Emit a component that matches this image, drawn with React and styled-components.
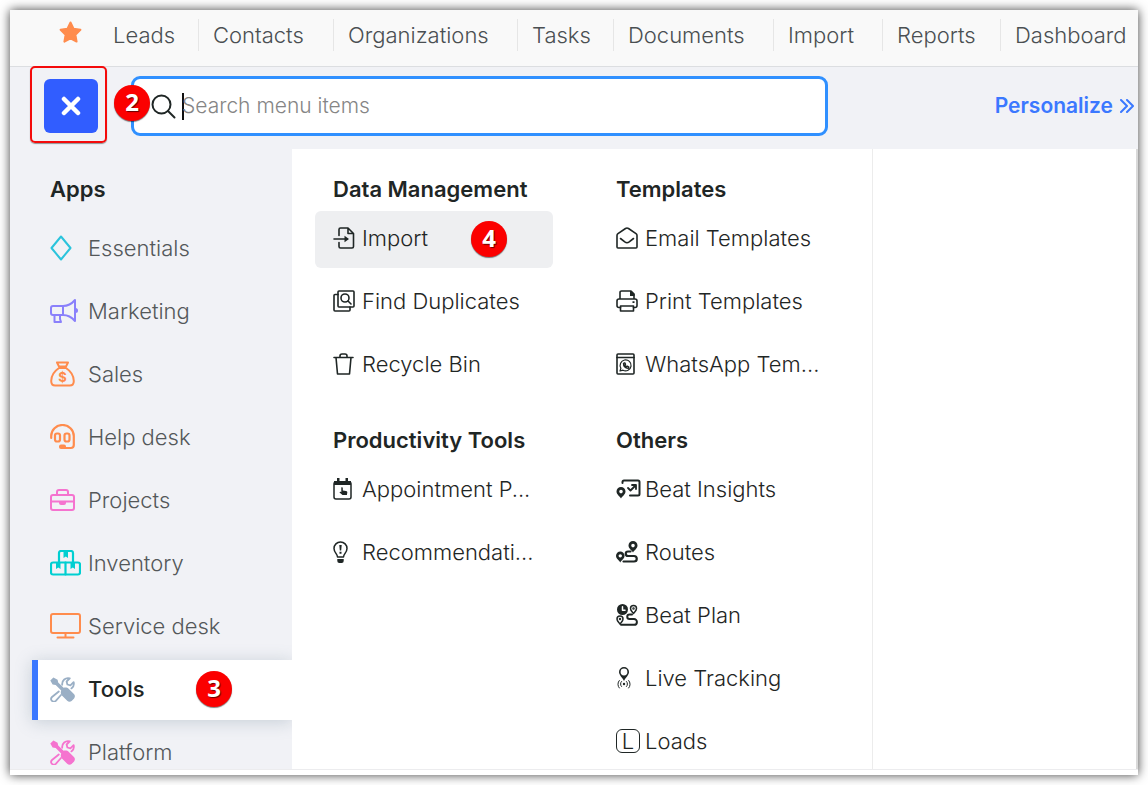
import React from "react";
import styled, { createGlobalStyle, css } from "styled-components";

const GlobalStyle = createGlobalStyle`
  *, *::before, *::after { box-sizing: border-box; }
  body { margin: 0; background: #fff; font-family: Inter, "Open Sans", sans-serif; color: #1f2625; }
  a { color: inherit; text-decoration: none; }
  ul { list-style: none; margin: 0; padding: 0; }
  h2 { margin: 0; }
`;

const Page = styled.div`
  height: 100vh;
  padding: 10px;
`;

const Frame = styled.div`
  display: flex;
  flex-direction: column;
  height: 100%;
  padding-bottom: 5px;
  background: #fff;
  box-shadow: 0 0 10px rgba(0, 0, 0, 0.75);
`;

const TopBar = styled.nav`
  display: flex;
  flex: none;
  height: 57px;
  background: #f9f9f9;
  border-bottom: 1px solid #dcdee1;
  overflow: hidden;
`;

const Favourite = styled.a`
  flex: none;
  width: 88px;
  padding: 10px 0 0 48px;
`;

const Tabs = styled.ul`
  display: grid;
  grid-template-columns: 100px 135px 184px 96px 160px 109px 118px 1fr;
  flex: 1;
  padding-top: 9px;
`;

const Tab = styled.li`
  height: 32px;
  padding-left: 15px;
  font-size: 22px;
  font-weight: 300;
  line-height: 32px;
  color: #4a4f52;
  white-space: nowrap;
  & + & { border-left: 1px solid #e6e6e6; padding-left: 14px; }
`;

const Header = styled.header`
  position: relative;
  display: flex;
  flex: none;
  align-items: center;
  height: 82px;
  padding: 0 4px 4px 34px;
  background: #f1f2f6;
`;

const CloseWrap = styled.div`
  position: relative;
  flex: none;
  margin-right: 33px;
`;

const Marker = styled.span`
  position: absolute;
  inset: -13px -9px -10px -14px;
  border: 2px solid #f40b0b;
  border-radius: 5px;
  box-shadow: 0 1px 1px rgba(0, 0, 0, 0.4);
  pointer-events: none;
`;

const CloseButton = styled.button`
  display: grid;
  place-items: center;
  width: 54px;
  height: 54px;
  padding: 0;
  border: 0;
  border-radius: 6px;
  background: #315dff;
`;

const SearchBox = styled.label`
  position: relative;
  display: flex;
  align-items: center;
  flex: 0 1 697px;
  height: 60px;
  padding-left: 17px;
  border: 3px solid #3090ff;
  border-radius: 9px;
  background: #fff;
`;

const Caret = styled.span`
  width: 2px;
  height: 27px;
  margin: 0 -2px 0 6px;
  background: #111;
`;

const SearchInput = styled.input`
  flex: 1;
  min-width: 0;
  padding: 0;
  border: 0;
  outline: 0;
  background: transparent;
  font: 300 21px/30px Inter, "Open Sans", sans-serif;
  &::placeholder { color: #858585; opacity: 1; }
`;

const Personalize = styled.a`
  display: flex;
  align-items: center;
  gap: 7px;
  margin-left: auto;
  font-size: 21px;
  font-weight: 600;
  line-height: 30px;
  color: #3b78ff;
`;

const Badge = styled.span`
  position: absolute;
  top: 50%;
  left: ${(p) => p.$left}px;
  display: grid;
  place-items: center;
  width: 36px;
  height: 36px;
  margin-top: ${(p) => (p.$raised ? -21 : -19)}px;
  border-radius: 50%;
  background: #fb0000;
  box-shadow: 0 1px 1px rgba(0, 0, 0, 0.5);
  color: #fff;
  font: 700 24px/32px "Open Sans", sans-serif;
  padding-bottom: 2px;
  text-shadow: 1px 1px 1px rgba(0, 0, 0, 0.6);
`;

const Main = styled.main`
  display: flex;
  flex: 1;
  min-height: 0;
  overflow: hidden;
  border-bottom: 1px solid #ececee;
`;

const Sidebar = styled.aside`
  flex: none;
  width: 282px;
  padding: 10px 0 0 22px;
  overflow: hidden;
  background: #f1f2f6;
`;

const SideTitle = styled.h2`
  padding-left: 18px;
  font-size: 22px;
  font-weight: 600;
  line-height: 60px;
`;

const SideList = styled.ul`
  display: flex;
  flex-direction: column;
  gap: 3px;
`;

const SideItem = styled.a`
  position: relative;
  display: flex;
  align-items: center;
  height: 60px;
  padding: 0 0 2px 12px;
  border-left: 6px solid transparent;
  font-size: 22px;
  font-weight: 300;
  color: #54585a;
  ${(p) =>
    p.$active &&
    css`
      border-left-color: #3b78ff;
      background: #fff;
      box-shadow: 0 2px 16px rgba(110, 130, 150, 0.32);
      color: #1f2625;
      font-weight: 500;
    `}
`;

const SideIcon = styled.span`
  display: flex;
  flex: none;
  width: 38px;
  color: ${(p) => p.$color};
`;

const Panel = styled.section`
  display: flex;
  flex: 1;
  min-width: 0;
  border-right: 2px solid #d9d9d9;
`;

const Columns = styled.div`
  display: grid;
  grid-template-columns: 238px 238px;
  gap: 45px;
  flex: none;
  width: 581px;
  padding: 18px 0 0 23px;
  border-right: 1px solid #ececec;
`;

const Column = styled.div`
  display: flex;
  flex-direction: column;
  gap: 24px;
`;

const GroupTitle = styled.h2`
  padding-left: 18px;
  font-size: 22px;
  font-weight: 600;
  line-height: 44px;
  white-space: nowrap;
`;

const GroupList = styled.ul`
  display: flex;
  flex-direction: column;
  gap: 6px;
`;

const MenuItem = styled.a`
  position: relative;
  display: flex;
  align-items: center;
  height: 57px;
  padding: 0 0 3px 18px;
  border-radius: 6px;
  background: ${(p) => (p.$active ? "#eeeff1" : "transparent")};
  font-size: 22px;
  font-weight: 300;
  white-space: nowrap;
`;

const MenuIcon = styled.span`
  display: flex;
  flex: none;
  width: 29px;
`;

const LetterBox = styled.span`
  display: grid;
  place-items: center;
  width: 24px;
  height: 24px;
  border: 1px solid #1f2625;
  border-radius: 6px;
  line-height: 20px;
`;

function Icon({ w, h, sw = 2, children }) {
  return (
    <svg
      width={w}
      height={h}
      viewBox={`0 0 ${w} ${h}`}
      fill="none"
      stroke="currentColor"
      strokeWidth={sw}
      strokeLinecap="round"
      strokeLinejoin="round"
      aria-hidden="true"
    >
      {children}
    </svg>
  );
}

const solid = { fill: "currentColor", stroke: "none" };

const toolsIcon = (
  <Icon w={25} h={25}>
    <path {...solid} d="M.3 3.500 3.400.4l4.200 2.300.6 2.700 5.400 5.400c2-.6 3.900-.2 5.300 1.200l5 5c1.300 1.300 1.300 3.200.2 4.400l-2.500 2.500c-1.200 1.100-3.100 1.100-4.400-.2l-5-5c-1.400-1.400-1.800-3.300-1-5.300L5.700 8.100l-3.100-.6z" />
    <path strokeWidth="1.800" d="M8.800 14.500 2 20a2.600 2.600 0 0 0 3.800 3.800L11 18" />
    <path strokeWidth="1.800" d="M12.200 7.800C11.800 3.400 15.400.2 19.800 1.300L16.600 4.500l.8 3 3 .8 3.200-3.200c.7 2.600-.3 5-2.200 6.300" />
  </Icon>
);

const apps = [
  { name: "Essentials", color: "#2bc4dc", icon: <Icon w={22} h={26}><path d="M11 1.500 20.500 13 11 24.500 1.500 13z" /></Icon> },
  {
    name: "Marketing", color: "#8a80fb",
    icon: (
      <Icon w={28} h={26}>
        <path d="M13 8H3a2 2 0 0 0-2 2v5a2 2 0 0 0 2 2h10z" />
        <path d="M13 8c5 0 9-2.500 12-6v21c-3-3.500-7-6-12-6z" />
        <path d="M4.500 17v7H11l-1-3V17" />
        <path {...solid} d="M25.500 10a2.500 2.500 0 0 1 0 5z" />
      </Icon>
    ),
  },
  {
    name: "Sales", color: "#ff8c4d",
    icon: (
      <Icon w={25} h={26}>
        <path d="M7 1.500h11L16 5.500H9z" />
        <path d="M9 7C4.500 10 1.200 15 1.200 20c0 3 1.500 4.500 4 4.500h14.600c2.500 0 4-1.500 4-4.500 0-5-3.300-10-7.800-13z" />
        <text x="12.500" y="20.500" textAnchor="middle" {...solid} fontSize="13" fontWeight="700">$</text>
      </Icon>
    ),
  },
  {
    name: "Help desk", color: "#ff8c4d",
    icon: (
      <Icon w={25} h={26} sw={2.2}>
        <path d="M1.200 14v-2a11.300 11 0 0 1 22.600 0v9a3 3 0 0 1-3 3H14" />
        <rect x="5" y="9.500" width="5" height="8" rx="2" />
        <rect x="14.500" y="9.500" width="5" height="8" rx="2" />
        <rect {...solid} x="9" y="20.500" width="7" height="4.500" rx="2" />
      </Icon>
    ),
  },
  {
    name: "Projects", color: "#f573cf",
    icon: (
      <Icon w={25} h={22}>
        <rect x="1" y="6" width="23" height="15" rx="2" />
        <path d="M7 6V3a2 2 0 0 1 2-2h7a2 2 0 0 1 2 2v3M1 12.500h23" />
        <path {...solid} d="M9 12.500h7v1.500a2 2 0 0 1-2 2h-3a2 2 0 0 1-2-2z" />
      </Icon>
    ),
  },
  {
    name: "Inventory", color: "#00cfd1",
    icon: (
      <Icon w={31} h={26} sw={2.2}>
        <path d="M9 12.500V3a2 2 0 0 1 2-2h10a2 2 0 0 1 2 2v9.500" />
        <rect x="1" y="12.500" width="29" height="12" rx="2" />
        <path d="M15.500 12.500v12" />
        <path {...solid} d="M13.500 1h4.500v7l-2.200-1.500L13.500 8zM6 12.500h4.500v6.500l-2.200-1.500L6 19zM20.500 12.500H25v6.500l-2.200-1.500-2.300 1.500z" />
      </Icon>
    ),
  },
  {
    name: "Service desk", color: "#ff8c4d",
    icon: (
      <Icon w={31} h={26}>
        <rect x="1" y="1" width="29" height="19" rx="2" />
        <path d="M15.500 20v4M7.500 24.500h16" />
      </Icon>
    ),
  },
  { name: "Tools", color: "#9aafc5", active: true, badge: "3", icon: toolsIcon },
  { name: "Platform", color: "#f573cf", icon: toolsIcon },
];

const pin = (x, y, k = 1) => (
  <path
    {...solid}
    fillRule="evenodd"
    transform={`translate(${x} ${y}) scale(${k})`}
    d="M4.500 0A4.500 4.500 0 0 0 0 4.500C0 7.500 3 9 4.500 11.500 6 9 9 7.500 9 4.500A4.500 4.500 0 0 0 4.500 0zM4.500 2.800a1.800 1.800 0 1 1 0 3.600 1.800 1.800 0 0 1 0-3.600z"
  />
);

const columns = [
  [
    {
      title: "Data Management",
      items: [
        {
          name: "Import", active: true, badge: "4",
          icon: (
            <Icon w={22} h={22} sw={1.6}>
              <path d="M6 8.500V2.500A1.500 1.500 0 0 1 7.500 1H15l5.500 5.500v13a1.500 1.500 0 0 1-1.500 1.500H7.500A1.500 1.500 0 0 1 6 19.500V15.500M15 1v5.500h5.500M1 12h13" />
              <path {...solid} d="M11.500 8.700 16 12l-4.500 3.300z" />
            </Icon>
          ),
        },
        {
          name: "Find Duplicates",
          icon: (
            <Icon w={22} h={22} sw={1.6}>
              <rect x="5" y="1" width="16" height="16" rx="1" />
              <path d="M5 4.500H2a1 1 0 0 0-1 1V20a1 1 0 0 0 1 1h14a1 1 0 0 0 1-1v-3" />
              <circle cx="12" cy="8" r="4" />
              <path d="m15 11 3 3" />
            </Icon>
          ),
        },
        {
          name: "Recycle Bin",
          icon: (
            <Icon w={21} h={22} sw={1.6}>
              <path d="M1 4.500h19M3 4.500 4.500 21h12L18 4.500M7 4.500V3a2 2 0 0 1 2-2h3a2 2 0 0 1 2 2v1.500" />
            </Icon>
          ),
        },
      ],
    },
    {
      title: "Productivity Tools",
      items: [
        {
          name: "Appointment P...",
          icon: (
            <Icon w={19} h={22} sw={1.5}>
              <rect x="1" y="4" width="17" height="17" rx="2" />
              <path {...solid} d="M1 3h17v4H1zM4 0h2.500v4H4zM12.500 0H15v4h-2.500z" />
              <path {...solid} d="M8.300 9.600c.8-.6 1.500 0 1.500.8v2l3.200.5c1 .2 1.400.8 1.300 1.700L13.900 17H9.500l-3-2.500c.4-.8 1.100-.8 1.800-.2z" />
            </Icon>
          ),
        },
        {
          name: "Recommendati...",
          icon: (
            <Icon w={15} h={22} sw={1.5}>
              <path d="M4.500 16c0-3-3.500-4.500-3.500-8.500a6.500 6.500 0 0 1 13 0c0 4-3.500 5.500-3.500 8.500z" />
              <path {...solid} d="M6.300 4h2.400l-.5 5.500H6.800zM6.500 10.800h2v2h-2zM4.300 18h6.400v2a2 2 0 0 1-2 2H6.300a2 2 0 0 1-2-2z" />
            </Icon>
          ),
        },
      ],
    },
  ],
  [
    {
      title: "Templates",
      items: [
        {
          name: "Email Templates",
          icon: (
            <Icon w={22} h={22} sw={1.6}>
              <path d="M1 8.500c0-.8.300-1.300 1-1.800L9.500 1.500c1-.7 2-.7 3 0L20 6.700c.7.500 1 1 1 1.800V20a1 1 0 0 1-1 1H2a1 1 0 0 1-1-1z" />
              <path d="m4.500 11.500 4.300 3.400c1.500 1.100 2.900 1.100 4.400 0l4.300-3.400" />
            </Icon>
          ),
        },
        {
          name: "Print Templates",
          icon: (
            <Icon w={22} h={22} sw={1.6}>
              <path d="M4 9V2.500A1.500 1.500 0 0 1 5.500 1H15l3 3v5M4.500 17.500H3a2 2 0 0 1-2-2V11a2 2 0 0 1 2-2h16a2 2 0 0 1 2 2v4.500a2 2 0 0 1-2 2h-1.500" />
              <path d="M4.500 16h13v5h-13z" />
              <path {...solid} d="M14 1h1.500L18.500 4v2H14zM16.500 11.300h2v1.600h-2z" />
            </Icon>
          ),
        },
        {
          name: "WhatsApp Tem...",
          icon: (
            <Icon w={19} h={22} sw={1.6}>
              <rect x="1" y="1" width="17" height="20" rx="1" />
              <path d="M1 4.500h17" />
              <path strokeWidth="1.200" d="m4 18 .9-2.800a5.500 5.500 0 1 1 2.100 2z" />
              <path strokeWidth="1.400" d="M7.500 10.300c0 3 1.800 4.800 4.700 5l.7-1.300-1.600-.9-.8.600c-.8-.3-1.200-.9-1.500-1.600l.5-.7-.7-1.600z" />
            </Icon>
          ),
        },
      ],
    },
    {
      title: "Others",
      items: [
        {
          name: "Beat Insights",
          icon: (
            <Icon w={25} h={21} sw={2}>
              <path d="M6.500 4V3a1.500 1.500 0 0 1 1.500-1.500h14A1.500 1.500 0 0 1 23.500 3v12a1.500 1.500 0 0 1-1.500 1.500h-8" />
              <path strokeWidth="1.800" d="m12 9 2.500 2.500L19 7M16 6h4v4" />
              {pin(0.5, 8)}
            </Icon>
          ),
        },
        {
          name: "Routes",
          icon: (
            <Icon w={22} h={22} sw={2.2}>
              <path d="M14.500 10.500H12a2.200 2.200 0 0 0 0 4.500h6a2.500 2.500 0 0 1 0 5.500H7.500" />
              {pin(12.5, 0)}
              {pin(0, 10.5, 0.95)}
            </Icon>
          ),
        },
        {
          name: "Beat Plan",
          icon: (
            <Icon w={22} h={22} sw={1.5}>
              <circle {...solid} cx="6.500" cy="5.500" r="5.500" />
              <path stroke="#fff" d="M6.500 2.800v3.400H9" />
              <path d="M17.500 9.500c-1-1.700-3-2.700-3-5a3 3 0 0 1 6 0c0 2.300-2 3.300-3 5zM4 20c-1-1.700-3-2.700-3-5a3 3 0 0 1 6 0c0 2.300-2 3.300-3 5z" />
              <circle cx="17.500" cy="4.500" r=".5" />
              <circle cx="4" cy="15" r=".5" />
              <path strokeWidth="2" d="M16 10.500h-2.500a2 2 0 0 0 0 4.500H18a2.700 2.700 0 0 1 0 5.800H5" />
            </Icon>
          ),
        },
        {
          name: "Live Tracking",
          icon: (
            <Icon w={15} h={22} sw={1}>
              <path {...solid} fillRule="evenodd" d="M8 0a5 5 0 0 0-5 5c0 3 3 5 5 9 2-4 5-6 5-9a5 5 0 0 0-5-5zm0 1.600a3.400 3.400 0 1 1 0 6.800 3.400 3.400 0 0 1 0-6.800z" />
              <circle {...solid} cx="8" cy="17" r="1.200" />
              <path d="M5.500 14.500a3.500 3.500 0 0 0 0 5M10.500 14.500a3.500 3.500 0 0 1 0 5M3.300 13.500a5.500 5.500 0 0 0 0 7.500M12.700 13.500a5.500 5.500 0 0 1 0 7.500" />
            </Icon>
          ),
        },
        { name: "Loads", icon: <LetterBox aria-hidden="true">L</LetterBox> },
      ],
    },
  ],
];

const tabs = ["Leads", "Contacts", "Organizations", "Tasks", "Documents", "Import", "Reports", "Dashboard"];

export default function App() {
  return (
    <Page>
      <GlobalStyle />
      <Frame>
        <TopBar>
          <Favourite href="#favourites" aria-label="Favourites">
            <svg width="25" height="24" viewBox="0 0 25 24" fill="#ff8c4d" stroke="#ff8c4d" strokeWidth="2" strokeLinejoin="round">
              <path d="m12.500 2.500 3 6.300 6.900 1-5 4.900 1.200 6.900-6.100-3.300-6.100 3.300 1.200-6.900-5-4.900 6.900-1z" />
            </svg>
          </Favourite>
          <Tabs>
            {tabs.map((t) => (
              <Tab key={t}><a href={`#${t}`}>{t}</a></Tab>
            ))}
          </Tabs>
        </TopBar>
        <Header>
          <CloseWrap>
            <CloseButton type="button" aria-label="Close menu">
              <svg width="20" height="20" viewBox="0 0 20 20" stroke="#fff" strokeWidth="4.500" strokeLinecap="round">
                <path d="m3 3 14 14M17 3 3 17" />
              </svg>
            </CloseButton>
            <Marker />
          </CloseWrap>
          <SearchBox>
            <Icon w={25} h={25} sw={2}>
              <circle cx="10.500" cy="10.500" r="9" />
              <path d="m17 17 6.500 6.500" />
            </Icon>
            <Caret />
            <SearchInput type="text" placeholder="Search menu items" aria-label="Search menu items" />
            <Badge $left={-20} $raised>2</Badge>
          </SearchBox>
          <Personalize href="#personalize">
            Personalize
            <Icon w={14} h={14} sw={2}><path d="m1 1 6 6-6 6M7 1l6 6-6 6" /></Icon>
          </Personalize>
        </Header>
        <Main>
          <Sidebar>
            <SideTitle>Apps</SideTitle>
            <SideList>
              {apps.map((a) => (
                <li key={a.name}>
                  <SideItem href={`#${a.name}`} $active={a.active}>
                    <SideIcon $color={a.color}>{a.icon}</SideIcon>
                    {a.name}
                    {a.badge && <Badge $left={158}>{a.badge}</Badge>}
                  </SideItem>
                </li>
              ))}
            </SideList>
          </Sidebar>
          <Panel>
            <Columns>
              {columns.map((groups, i) => (
                <Column key={i}>
                  {groups.map((g) => (
                    <div key={g.title}>
                      <GroupTitle>{g.title}</GroupTitle>
                      <GroupList>
                        {g.items.map((m) => (
                          <li key={m.name}>
                            <MenuItem href={`#${m.name}`} $active={m.active}>
                              <MenuIcon>{m.icon}</MenuIcon>
                              {m.name}
                              {m.badge && <Badge $left={156}>{m.badge}</Badge>}
                            </MenuItem>
                          </li>
                        ))}
                      </GroupList>
                    </div>
                  ))}
                </Column>
              ))}
            </Columns>
          </Panel>
        </Main>
      </Frame>
    </Page>
  );
}
